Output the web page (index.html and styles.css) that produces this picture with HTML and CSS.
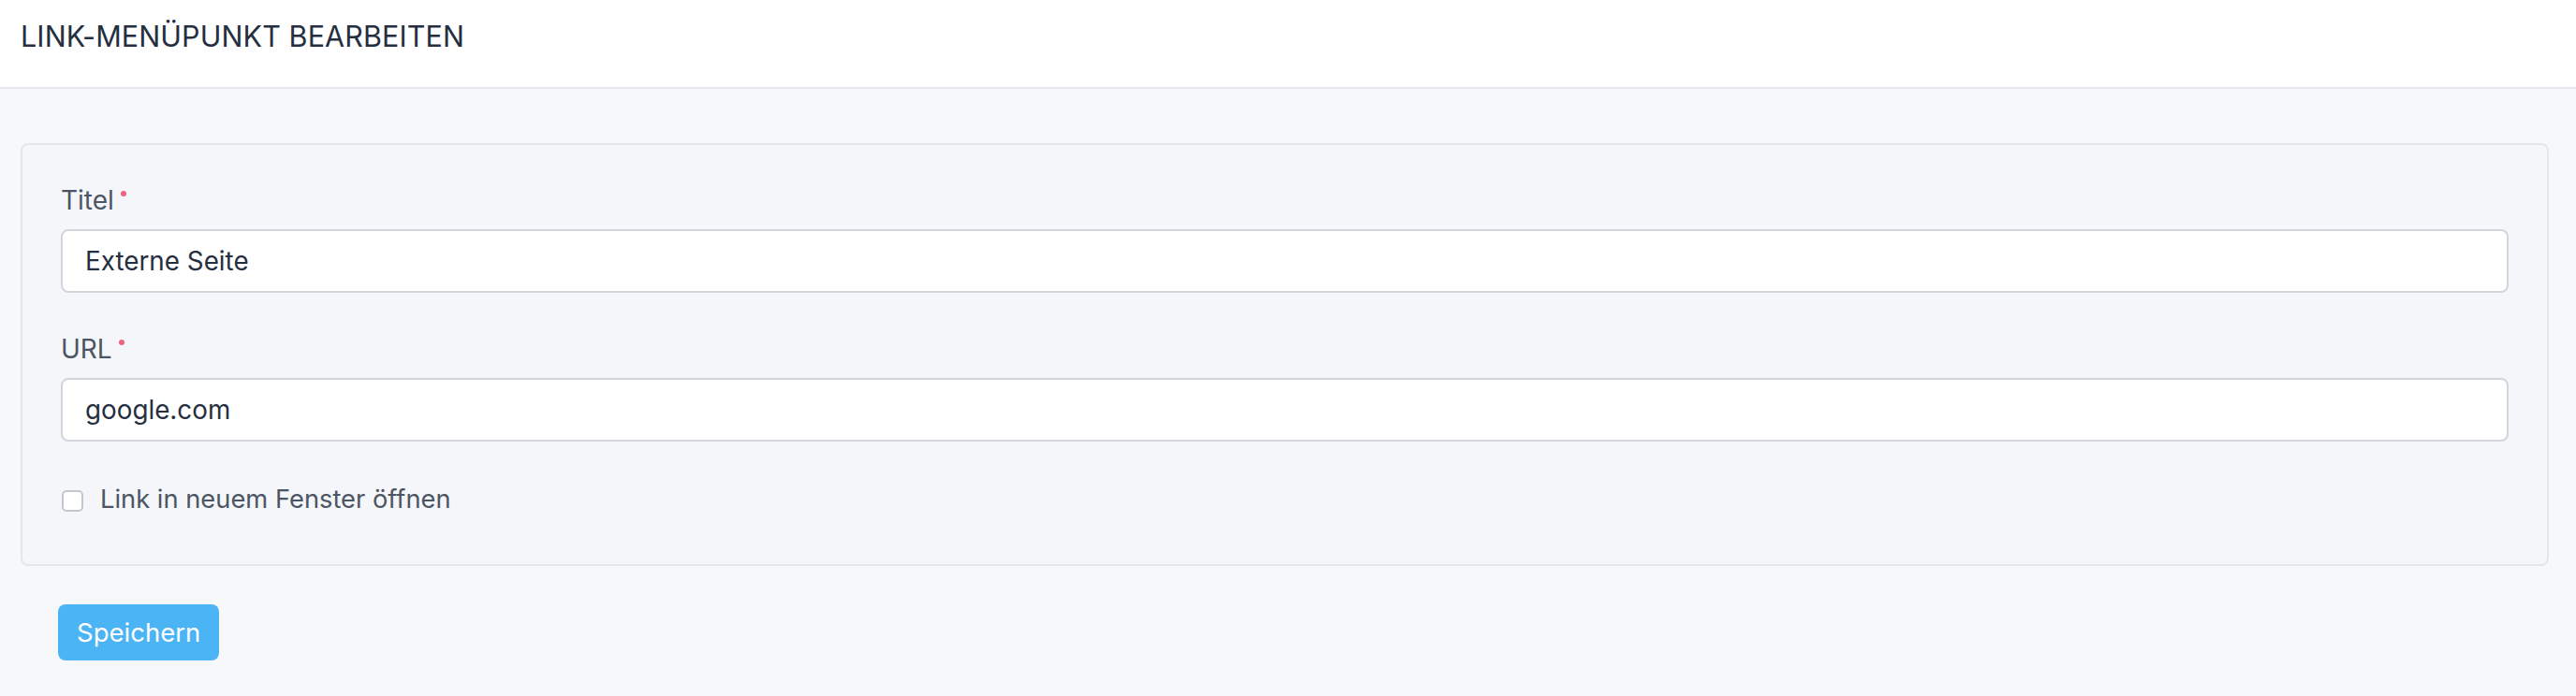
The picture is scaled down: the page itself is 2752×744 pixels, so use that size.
FILE: index.html
```html
<!DOCTYPE html>
<html lang="de">
<head>
<meta charset="utf-8">
<title>Link-Menüpunkt bearbeiten</title>
<link rel="stylesheet" href="styles.css">
</head>
<body>
<header class="page-header">
  <h1 class="page-title">LINK-MENÜPUNKT BEARBEITEN</h1>
</header>
<main class="page-main">
  <form class="form">
    <div class="card">
      <div class="field">
        <label class="field-label" for="titel">Titel<span class="req"></span></label>
        <input class="field-input" id="titel" type="text" value="Externe Seite">
      </div>
      <div class="field">
        <label class="field-label" for="url">URL<span class="req"></span></label>
        <input class="field-input" id="url" type="text" value="google.com">
      </div>
      <label class="check-row">
        <input class="check-box" type="checkbox">
        <span class="check-label">Link in neuem Fenster öffnen</span>
      </label>
    </div>
    <div class="actions">
      <button class="btn-primary" type="button">Speichern</button>
    </div>
  </form>
</main>
</body>
</html>
```
FILE: styles.css
```css
* { box-sizing: border-box; }
html, body {
  margin: 0;
  padding: 0;
}
body {
  background: #f7f8fa;
  font-family: Inter, "Noto Sans", sans-serif;
  color: #252f3f;
  width: 2752px;
  height: 744px;
  overflow: hidden;
}
.page-header {
  height: 95px;
  background: #ffffff;
  border-bottom: 2px solid #e4e7eb;
  padding: 19px 22px 0 22px;
}
.page-title {
  margin: 0;
  font-size: 30.5px;
  line-height: 40px;
  font-weight: 400;
  color: #252f3f;
  letter-spacing: 0.1px;
}
.page-main {
  padding: 58px 29px 0 22px;
}
.card {
  background: #f4f6f9;
  border: 2px solid #e3e7ec;
  border-radius: 8px;
  padding: 39px 41px 49px 41px;
  display: flex;
  flex-direction: column;
}
.field {
  display: flex;
  flex-direction: column;
  margin-bottom: 40px;
}
.field-label {
  font-size: 28px;
  line-height: 40px;
  color: #4b5563;
  margin-bottom: 11px;
  display: flex;
  align-items: flex-start;
}
.req {
  display: inline-block;
  width: 6px;
  height: 6px;
  border-radius: 50%;
  background: #f0607f;
  margin-left: 7px;
  margin-top: 10px;
}
.field-input {
  height: 68px;
  border: 2px solid #d2d6dc;
  border-radius: 8px;
  background: #ffffff;
  padding: 0 24px;
  font-family: Inter, "Noto Sans", sans-serif;
  font-size: 27.8px;
  color: #252f3f;
  outline: none;
  width: 100%;
}
.check-row {
  display: flex;
  align-items: center;
  height: 40px;
  margin-top: 2px;
}
.check-box {
  appearance: none;
  -webkit-appearance: none;
  width: 23px;
  height: 23px;
  margin: 2px 18px 0 1px;
  border: 2px solid #c3c7cd;
  border-radius: 5px;
  background: #ffffff;
  flex: none;
}
.check-label {
  font-size: 27.3px;
  line-height: 40px;
  color: #4b5563;
}
.actions {
  padding: 41px 0 0 40px;
}
.btn-primary {
  height: 60px;
  padding: 0 20px;
  border: none;
  border-radius: 8px;
  background: #4bb4f5;
  color: #ffffff;
  font-family: Inter, "Noto Sans", sans-serif;
  font-size: 27.5px;
  line-height: 60px;
  font-weight: 400;
  cursor: pointer;
}
```
